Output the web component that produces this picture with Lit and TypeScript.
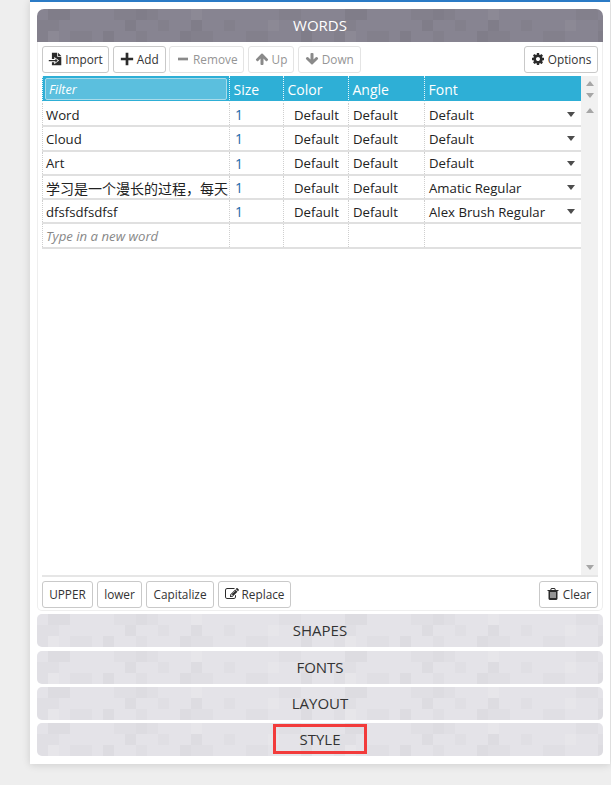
import { LitElement, html, css, unsafeCSS, svg } from "lit";
import { customElement } from "lit/decorators.js";

const TILE = [
  ".dd....mmdm...l.......mm...",
  "mm......d..m..d..m...l..m..",
  "ml.mm.d..m...dmm...mm...d..",
];
function tile(strength: number, light: number): string {
  const cells: string[] = [];
  TILE.forEach((row, y) =>
    [...row].forEach((c, x) => {
      if (c === ".") return;
      const fill = c === "l" ? `fill='white' fill-opacity='${light}'` : `fill='black' fill-opacity='${(c === "d" ? 0.05 : 0.027) * strength}'`;
      cells.push(`<rect x='${x * 11}' y='${y * 11}' width='11' height='11' ${fill}/>`);
    }),
  );
  const s = `<svg xmlns='http://www.w3.org/2000/svg' width='297' height='33'>${cells.join("")}</svg>`;
  return `url("data:image/svg+xml,${encodeURIComponent(s)}")`;
}

const ICONS: Record<string, string> = {
  plus: "M109 723H723V109H1069V723H1683V1069H1069V1683H723V1069H109Z",
  minus: "M256 723H1536V1069H256Z",
  up: "M1675 971q0 51-37 90l-75 75q-38 38-91 38-54 0-90-38l-294-293v704q0 52-37.5 84.5t-90.5 32.5h-128q-53 0-90.5-32.5t-37.5-84.5v-704l-294 293q-36 38-90 38t-90-38l-75-75q-38-38-38-90 0-53 38-91l651-651q35-37 90-37 54 0 91 37l651 651q37 39 37 91z",
  down: "M1675 832q0 53-37 90l-651 652q-39 37-91 37-53 0-90-37l-651-652q-38-36-38-90 0-53 38-91l74-75q39-37 91-37 53 0 90 37l294 294v-704q0-52 38-90t90-38h128q52 0 90 38t38 90v704l294-294q37-37 90-37 52 0 91 37l75 75q37 39 37 91z",
  cog: "M1152 896q0-106-75-181t-181-75-181 75-75 181 75 181 181 75 181-75 75-181zm512-109v222q0 12-8 23t-20 13l-185 28q-19 54-39 91 35 50 107 138 10 12 10 25t-9 23q-27 37-99 108t-94 71q-12 0-26-9l-138-108q-44 23-91 38-16 136-29 186-7 28-36 28h-222q-14 0-24.5-8.5t-11.5-21.5l-28-184q-49-16-90-37l-141 107q-10 9-25 9-14 0-25-11-126-114-165-168-7-10-7-23 0-12 8-23 15-21 51-66.5t54-70.5q-27-50-41-99l-183-27q-13-2-21-12.5t-8-23.5v-222q0-12 8-23t19-13l186-28q14-46 39-92-40-57-107-138-10-12-10-24 0-10 9-23 26-36 98.5-107.5t94.5-71.5q13 0 26 10l138 107q44-23 91-38 16-136 29-186 7-28 36-28h222q14 0 24.5 8.5t11.5 21.5l28 184q49 16 90 37l142-107q9-9 24-9 13 0 25 10 129 119 165 170 7 8 7 22 0 12-8 23-15 21-51 66.5t-54 70.5q26 50 41 98l183 28q13 2 21 12.5t8 23.5z",
  trash: "M704 1376v-704q0-14-9-23t-23-9h-64q-14 0-23 9t-9 23v704q0 14 9 23t23 9h64q14 0 23-9t9-23zm256 0v-704q0-14-9-23t-23-9h-64q-14 0-23 9t-9 23v704q0 14 9 23t23 9h64q14 0 23-9t9-23zm256 0v-704q0-14-9-23t-23-9h-64q-14 0-23 9t-9 23v704q0 14 9 23t23 9h64q14 0 23-9t9-23zm-544-992h448l-48-117q-7-9-17-11h-317q-10 2-17 11zm928 32v64q0 14-9 23t-23 9h-96v948q0 83-47 143.5t-113 60.5h-832q-66 0-113-58.5t-47-141.5v-952h-96q-14 0-23-9t-9-23v-64q0-14 9-23t23-9h309l70-167q15-37 54-63t79-26h320q40 0 79 26t54 63l70 167h309q14 0 23 9t9 23z",
  edit: "M888 1184l116-116-152-152-116 116v56h96v96h56zm440-720q-16-16-33 1l-350 350q-17 17-1 33t33-1l350-350q17-17 1-33zm80 594v190q0 119-84.5 203.5t-203.5 84.5h-832q-119 0-203.5-84.5t-84.5-203.5v-832q0-119 84.5-203.5t203.5-84.5h832q63 0 117 25 15 7 18 23 3 17-9 29l-49 49q-14 14-32 8-23-6-45-6h-832q-66 0-113 47t-47 113v832q0 66 47 113t113 47h832q66 0 113-47t47-113v-126q0-13 9-22l64-64q15-15 35-7t20 29zm-96-738l288 288-672 672h-288v-288zm444 132l-92 92-288-288 92-92q28-28 68-28t68 28l152 152q28 28 28 68t-28 68z",
  file: "M500 100H1180L1180 620H1700V1700H500V1300H800V1560L1420 1100L800 640V900H500ZM1290 110L1700 510H1290ZM100 1010H950V840L1240 1100L950 1360V1190H100Z",
};

const WORDS = [
  ["Word", "Default"],
  ["Cloud", "Default"],
  ["Art", "Default"],
  ["学习是一个漫长的过程，每天", "Amatic Regular"],
  ["dfsfsdfsdfsf", "Alex Brush Regular"],
];

@customElement("app-root")
export class AppRoot extends LitElement {
  static styles = css`
    :host {
      display: block;
      height: 785px;
      overflow: hidden;
      background: #eeeeee;
      font-family: "Open Sans", "Noto Sans CJK SC", sans-serif;
      font-size: 13.2px;
      color: #222;
    }
    .panel {
      box-sizing: border-box;
      margin-left: 30px;
      width: 580px;
      height: 764px;
      background: #fff;
      border-top: 2px solid #2b7bc6;
      padding: 7px 7px 0;
      box-shadow: 0 1px 8px rgba(0, 0, 0, 0.14);
    }
    .bar {
      position: relative;
      display: flex;
      align-items: center;
      justify-content: center;
      height: 33px;
      padding-bottom: 1px;
      box-sizing: border-box;
      font-size: 15px;
      background-color: #e4e3e8;
      background-image: ${unsafeCSS(tile(0.6, 0.1))};
      border-radius: 5px;
      color: #333;
      margin-top: 3.33px;
    }
    .bar.active {
      margin-top: 0;
      color: #fff;
      border-radius: 7px 7px 0 0;
      background-color: #878491;
      background-image: ${unsafeCSS(tile(1.1, 0.04))};
    }
    .content {
      box-sizing: border-box;
      height: 569px;
      border: 1px solid #eee;
      border-top: 0;
      border-radius: 0 0 5px 5px;
      padding: 4px 4px 0;
      display: flex;
      flex-direction: column;
    }
    .tools {
      display: flex;
      gap: 3.6px;
      height: 27px;
      flex: none;
    }
    .tools.bottom { gap: 4px; margin-top: 4px; }
    .spacer { flex: 1; }
    button {
      box-sizing: border-box;
      display: flex;
      align-items: center;
      justify-content: center;
      gap: 3px;
      height: 27px;
      padding: 0 0 1px;
      background: #fff;
      border: 1px solid #c9c9c9;
      border-radius: 3px;
      font: inherit;
      font-size: 11.8px;
      color: #333;
    }
    button[disabled] { border-color: #e4e4e4; color: #959595; }
    button svg { width: 14px; height: 14px; fill: #2b2b2b; flex: none; }
    button[disabled] svg { fill: #8a8a8a; }
    .grid {
      flex: none;
      height: 499px;
      margin-top: 3px;
      display: grid;
      grid-template-columns: 1fr 17px;
      grid-template-rows: 25px 1fr;
      border-bottom: 2px solid #e6e6e6;
    }
    .row {
      display: grid;
      grid-template-columns: 187px 54px 65px 76px 157px;
    }
    .head { background: #2eafd6; color: #fff; font-size: 14px; height: 25px; }
    .head > div {
      display: flex;
      align-items: center;
      padding-left: 3.5px;
      border-left: 1px dotted #e8f6fb;
    }
    .head > div:first-child { padding: 2px; }
    .filter {
      box-sizing: border-box;
      width: 100%;
      height: 22px;
      display: flex;
      align-items: center;
      padding-left: 3px;
      background: #5bbfde;
      border: 1px solid #a9dbea;
      border-radius: 2px;
      font-style: italic;
      font-size: 12.5px;
    }
    .body { padding-top: 2px; box-sizing: border-box; }
    .body .row { height: 24.3px; box-sizing: border-box; border-bottom: 2px solid #e0e0e0; }
    .body .row > div {
      display: flex;
      align-items: center;
      white-space: nowrap;
      overflow: hidden;
      padding: 1px 0 0 4px;
      border-left: 1px dotted #cfcfcf;
    }
    .body .row > div:first-child { padding-left: 3px; }
    .body .row > .cjk { font-size: 14px; }
    .body .row > .num { color: #1c69a8; padding-left: 5px; font-size: 14px; }
    .body .row > .ctr { padding-left: 10px; }
    .body .row > .sel { justify-content: space-between; padding-right: 6px; }
    .body .row > .new { color: #888; font-style: italic; }
    .caret {
      width: 0;
      height: 0;
      border: 4px solid transparent;
      border-top: 5px solid #4d4d4d;
      border-bottom: 0;
    }
    .track {
      background: #f1f1f1;
      display: flex;
      flex-direction: column;
      align-items: center;
      justify-content: space-between;
      padding: 7px 0 5px;
      box-sizing: border-box;
    }
    .track.h { padding: 5px 0 3px; }
    .up, .dn {
      width: 0;
      height: 0;
      border-left: 4px solid transparent;
      border-right: 4px solid transparent;
    }
    .up { border-bottom: 5px solid #a6a6a6; }
    .dn { border-top: 5px solid #a6a6a6; }
    .highlight {
      position: absolute;
      left: 236px;
      top: 1px;
      width: 94px;
      height: 30px;
      box-sizing: border-box;
      border: 3px solid #f23b3b;
    }
  `;

  icon(name: string) {
    return html`<svg viewBox="0 0 1792 1792" aria-hidden="true">${svg`<path d=${ICONS[name]}></path>`}</svg>`;
  }

  btn(label: string, width: number, icon?: string, disabled = false) {
    return html`<button ?disabled=${disabled} style="width:${width}px">${icon ? this.icon(icon) : ""}${label}</button>`;
  }

  render() {
    return html`
      <div class="panel">
        <div class="bar active">WORDS</div>
        <div class="content">
          <div class="tools">
            ${this.btn("Import", 67, "file")} ${this.btn("Add", 53.3, "plus")}
            ${this.btn("Remove", 74.7, "minus", true)} ${this.btn("Up", 46.5, "up", true)}
            ${this.btn("Down", 62.8, "down", true)}
            <div class="spacer"></div>
            ${this.btn("Options", 74, "cog")}
          </div>
          <div class="grid">
            <div class="row head">
              <div><div class="filter">Filter</div></div>
              <div>Size</div><div>Color</div><div>Angle</div><div>Font</div>
            </div>
            <div class="track h"><i class="up"></i><i class="dn"></i></div>
            <div class="body">
              ${WORDS.map(
                ([w, f]) => html`<div class="row">
                  <div class=${w.charCodeAt(0) > 255 ? "cjk" : ""}>${w}</div>
                  <div class="num">1</div>
                  <div class="ctr">Default</div>
                  <div>Default</div>
                  <div class="sel">${f}<i class="caret"></i></div>
                </div>`,
              )}
              <div class="row">
                <div class="new">Type in a new word</div>
                <div></div><div></div><div></div><div></div>
              </div>
            </div>
            <div class="track"><i class="up"></i><i class="dn"></i></div>
          </div>
          <div class="tools bottom">
            ${this.btn("UPPER", 51)} ${this.btn("lower", 45)} ${this.btn("Capitalize", 68)}
            ${this.btn("Replace", 73, "edit")}
            <div class="spacer"></div>
            ${this.btn("Clear", 59, "trash")}
          </div>
        </div>
        <div class="bar">SHAPES</div>
        <div class="bar">FONTS</div>
        <div class="bar">LAYOUT</div>
        <div class="bar">STYLE<div class="highlight"></div></div>
      </div>
    `;
  }
}
